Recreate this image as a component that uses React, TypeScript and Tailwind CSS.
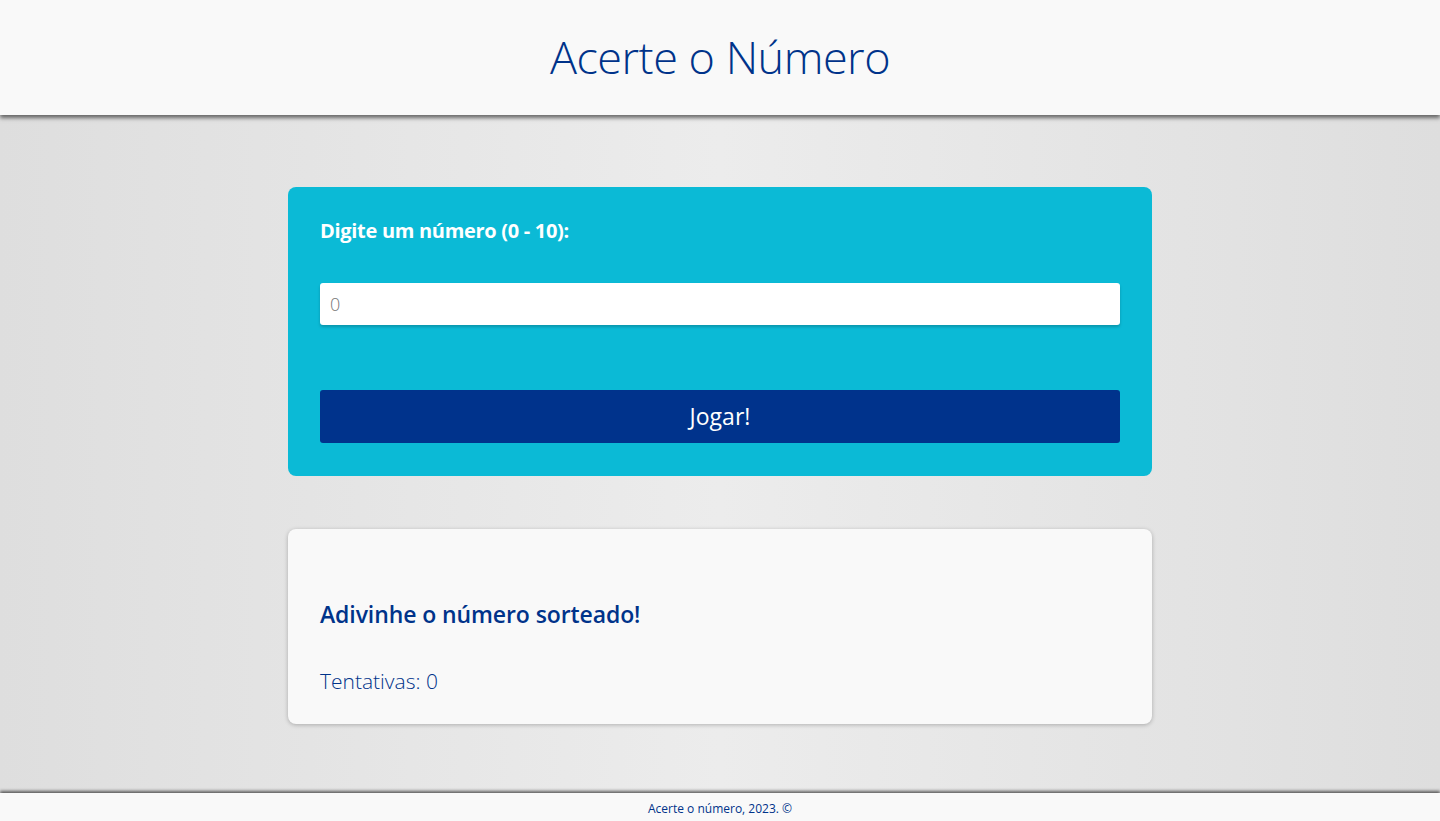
import React, { useState } from 'react';

const font = { fontFamily: '"Open Sans", "Noto Sans", sans-serif' };

export default function App() {
  const [guess, setGuess] = useState('');
  const [tries, setTries] = useState(0);

  return (
    <div style={font} className="min-h-[821px] flex flex-col bg-[linear-gradient(90deg,#dedede_0%,#ececec_50%,#dedede_100%)]">
      <header className="relative z-10 h-[115px] bg-[#f9f9f9] flex items-center justify-center shadow-[0_3px_4px_rgba(0,0,0,0.55)]">
        <h1 className="text-[45px] font-light text-[#00338a] tracking-[-0.5px] leading-none mt-[-2px]">
          Acerte o Número
        </h1>
      </header>

      <main className="flex-1 flex flex-col items-center pt-[72px] pb-[68px]">
        <section className="w-[864px] bg-[#0bbad6] rounded-lg px-8 pt-[30px] pb-[33px]">
          <label htmlFor="guess" className="block text-white text-[20px] font-bold leading-[28px] tracking-[-0.3px]">
            Digite um número (0 - 10):
          </label>
          <input
            id="guess"
            type="number"
            value={guess}
            onChange={(e) => setGuess(e.target.value)}
            placeholder="0"
            className="mt-[38px] block w-full h-[42px] bg-white rounded-[3px] px-[10px] text-[18px] font-light text-gray-700 placeholder:text-[#777] outline-none shadow-[0_2px_3px_rgba(0,0,0,0.2)]"
          />
          <button
            onClick={() => setTries(tries + 1)}
            className="mt-[65px] block w-full h-[53px] bg-[#00338c] rounded-[3px] text-white text-[23px] leading-none"
          >
            Jogar!
          </button>
        </section>

        <section className="mt-[53px] w-[864px] h-[195px] bg-[#f9f9f9] rounded-lg px-8 pt-[70px] shadow-[0_1px_4px_rgba(0,0,0,0.25)]">
          <h2 className="text-[23px] font-semibold text-[#00338a] leading-[30px] tracking-[-0.1px]">
            Adivinhe o número sorteado!
          </h2>
          <p className="mt-[38px] text-[21px] font-light text-[#00338a] leading-[28px]">
            Tentativas: {tries}
          </p>
        </section>
      </main>

      <footer className="relative h-[28px] bg-[#f9f9f9] flex items-center justify-center pt-[3px] shadow-[0_-2px_3px_rgba(0,0,0,0.6)]">
        <span className="text-[12px] text-[#00338a] leading-none">Acerte o número, 2023. ©</span>
      </footer>
    </div>
  );
}
